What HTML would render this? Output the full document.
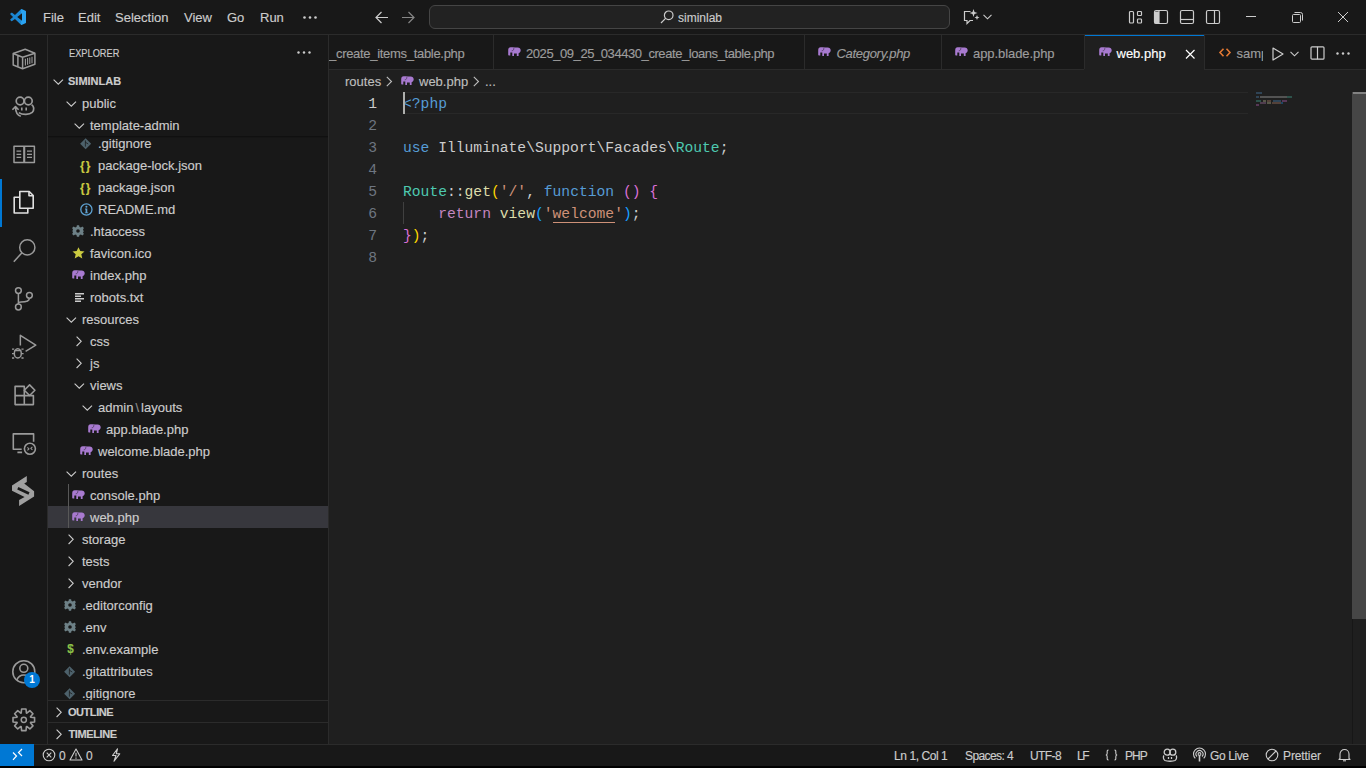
<!DOCTYPE html>
<html><head><meta charset="utf-8">
<style>
*{box-sizing:border-box;margin:0;padding:0}
html,body{width:1366px;height:768px;overflow:hidden;background:#181818;font-family:"Liberation Sans",sans-serif;color:#cccccc}
.t,.tabt,.st{-webkit-text-stroke:0.15px currentColor}
.a{position:absolute}
svg{position:absolute;overflow:visible}
.t{position:absolute;white-space:nowrap;font-size:13px;line-height:22px;padding-top:1px}
#title{left:0;top:0;width:1366px;height:35px;background:#181818;border-bottom:1px solid #2b2b2b}
#act{left:0;top:35px;width:48px;height:709px;background:#181818;border-right:1px solid #2b2b2b}
#side{left:48px;top:35px;width:281px;height:709px;background:#181818;border-right:1px solid #2b2b2b}
#tabs{left:329px;top:35px;width:1037px;height:35px;background:#181818;border-bottom:1px solid #2b2b2b}
#editor{left:329px;top:70px;width:1037px;height:674px;background:#1f1f1f}
#status{left:0;top:744px;width:1366px;height:22px;background:#181818;border-top:1px solid #2b2b2b}
#bottomband{left:0;top:766px;width:1366px;height:2px;background:#000000}
.menu{font-size:13px;line-height:35px;top:0;color:#cccccc;padding-top:0}
.code{position:absolute;font-family:"Liberation Mono",monospace;font-size:14.67px;line-height:22px;white-space:pre;color:#cccccc}
.ln{position:absolute;font-family:"Liberation Mono",monospace;font-size:14.67px;line-height:22px;color:#6e7681;text-align:right;width:40px;left:337px}
.tab{position:absolute;top:35px;height:35px;border-right:1px solid #2b2b2b;background:#181818}
.tabt{position:absolute;top:0;padding-top:1px;line-height:35px;font-size:13px;color:#9d9d9d;white-space:nowrap}
.st{position:absolute;top:744px;padding-top:1px;line-height:22px;font-size:12px;color:#cccccc;white-space:nowrap}
</style></head><body>

<div id="title" class="a"></div>
<div id="act" class="a"></div>
<div id="side" class="a"></div>
<div id="tabs" class="a"></div>
<div id="editor" class="a"></div>
<div id="status" class="a"></div>
<div id="bottomband" class="a"></div>

<!-- logo -->
<svg style="left:10px;top:9px" width="16" height="16" viewBox="0 0 100 100"><defs><linearGradient id="lg" x1="0" x2="1" y1="0" y2="0"><stop offset="0" stop-color="#1a84cf"/><stop offset="0.68" stop-color="#1c8ad6"/><stop offset="0.72" stop-color="#2aa3f2"/><stop offset="1" stop-color="#2aa3f2"/></linearGradient></defs><path fill="url(#lg)" d="M96.46 10.8L75.86.87a6.23 6.23 0 0 0-7.1 1.2L31 37 13.5 23.8a4.16 4.16 0 0 0-5.32.24L3 28.5a4.17 4.17 0 0 0 0 6.16L19 50 3 64.3a4.17 4.17 0 0 0 0 6.16l5.2 4.5a4.16 4.16 0 0 0 5.32.24L31 63l37.76 34.9a6.22 6.22 0 0 0 7.1 1.2l20.6-9.92A6.250 6.250 0 0 0 100 83.6V16.4a6.25 6.25 0 0 0-3.54-5.6zM75.02 72.7L45.11 50l29.91-22.7v45.4z"/></svg>
<div class="t menu" style="left:43px">File</div>
<div class="t menu" style="left:78px">Edit</div>
<div class="t menu" style="left:115px">Selection</div>
<div class="t menu" style="left:184px">View</div>
<div class="t menu" style="left:227px">Go</div>
<div class="t menu" style="left:260px">Run</div>
<svg style="left:303px;top:16px" width="14" height="3"><circle cx="1.5" cy="1.5" r="1.3" fill="#cccccc"/><circle cx="7" cy="1.5" r="1.3" fill="#cccccc"/><circle cx="12.5" cy="1.5" r="1.3" fill="#cccccc"/></svg>
<!-- nav arrows -->
<svg style="left:375px;top:11px" width="14" height="13" fill="none" stroke="#cccccc" stroke-width="1.2"><path d="M1 6.5H13M6.5 1L1 6.5L6.5 12"/></svg>
<svg style="left:401px;top:11px" width="14" height="13" fill="none" stroke="#868686" stroke-width="1.2"><path d="M1 6.5H13M7.5 1L13 6.5L7.5 12"/></svg>
<!-- command center -->
<div class="a" style="left:429px;top:5px;width:521px;height:24px;border:1px solid #454545;border-radius:6px;background:#222222"></div>
<svg style="left:660px;top:10px" width="14" height="14" fill="none" stroke="#cccccc" stroke-width="1.2"><circle cx="8.7" cy="5.3" r="4.3"/><path d="M5.6 8.4L1 13"/></svg>
<div class="t" style="left:678px;top:6px;font-size:12px;line-height:22px;color:#cccccc">siminlab</div>
<!-- copilot -->
<svg style="left:963px;top:8px" width="17" height="17" fill="none" stroke="#cccccc" stroke-width="1.2"><path d="M7.5 3.5H1.5V12.5H4V15.5L7 12.5H10"/><path fill="#cccccc" stroke="none" d="M10.5 1L11.5 4L14.5 5L11.5 6L10.5 9L9.5 6L6.5 5L9.5 4Z"/><path fill="#cccccc" stroke="none" d="M14 7L14.7 8.8L16.5 9.5L14.7 10.2L14 12L13.3 10.2L11.5 9.5L13.3 8.8Z"/></svg>
<svg style="left:983px;top:14px" width="9" height="6" fill="none" stroke="#cccccc" stroke-width="1.1"><path d="M0.5 0.8L4.5 4.8L8.5 0.8"/></svg>
<!-- layout icons -->
<svg style="left:1128px;top:10px" width="16" height="15" fill="none" stroke="#cccccc" stroke-width="1.2"><rect x="1.5" y="1.5" width="4" height="11.5" rx="1"/><rect x="9.5" y="1.5" width="4" height="4" rx="0.8"/><rect x="9.5" y="9" width="4" height="4" rx="0.8"/></svg>
<svg style="left:1153px;top:10px" width="16" height="15" fill="none" stroke="#cccccc" stroke-width="1.2"><rect x="1.5" y="0.5" width="13" height="13" rx="1.5"/><path d="M1.5 1.5H6V13.5H1.5Z" fill="#cccccc" stroke="none"/><path d="M6 0.5V13.5"/></svg>
<svg style="left:1179px;top:10px" width="16" height="15" fill="none" stroke="#cccccc" stroke-width="1.2"><rect x="1.5" y="0.5" width="13" height="13" rx="1.5"/><path d="M1.5 9.5H14.5"/></svg>
<svg style="left:1205px;top:10px" width="16" height="15" fill="none" stroke="#cccccc" stroke-width="1.2"><rect x="1.5" y="0.5" width="13" height="13" rx="1.5"/><path d="M9.5 0.5V13.5"/></svg>
<!-- window controls -->
<svg style="left:1245px;top:16px" width="12" height="2"><rect x="1" y="0" width="10" height="1" fill="#cccccc"/></svg>
<svg style="left:1291px;top:11px" width="13" height="13" fill="none" stroke="#cccccc" stroke-width="1"><rect x="1.5" y="3.5" width="8" height="8" rx="1"/><path d="M3.5 1.5H9.5A2 2 0 0 1 11.5 3.5V9.5"/></svg>
<svg style="left:1337px;top:11px" width="12" height="12" fill="none" stroke="#cccccc" stroke-width="1"><path d="M1 1L11 11M11 1L1 11"/></svg>



<!-- ACT -->
<svg style="left:0;top:0" width="48" height="744" fill="none" stroke="#9a9a9a" stroke-width="1.5" stroke-linejoin="round">
 <path d="M13.2 53.5L25.2 49.2L34.9 53.3V64.2L22.6 68.7L13.2 65Z"/>
 <path d="M13.2 53.5L22.6 57.2L34.9 53.3M22.6 57.2V68.7M17.9 55.4V66.6"/>
 <path d="M25.4 58.8V65.6M27.6 58.1V64.8M29.8 57.4V64M32 56.7V63.2" stroke-width="1.1"/>
 <circle cx="20.1" cy="101" r="3.9" stroke-width="1.7"/><circle cx="28.3" cy="101" r="3.9" stroke-width="1.7"/>
 <path d="M31.6 104.6C34 106.2 34.6 110 32.2 112.4C29.6 114.8 22.5 115 18.8 112.6" stroke-width="1.7"/>
 <path d="M21.8 107.6V110.4M26.2 107.6V110.4" stroke-width="1.6"/>
 <path d="M20.8 116.2C17.2 115.4 15.6 112 15.5 106.8M12.4 109.8L15.5 106.6L18.6 109.8" stroke-width="1.6"/>
 <path d="M14 146.2H23.9V162.5H14ZM24.5 146.2H34.4V162.5H24.5Z"/>
 <path d="M16.5 151.2H21.2M16.5 154.3H21.2M16.5 157.3H21.2M27 151.2H32M27 154.3H32M27 157.3H32" stroke-width="1.3"/>
 <g stroke="#e0e0e0" stroke-width="1.6">
  <path d="M19.5 197.2H14.2V213H27.8V208.5"/>
  <path d="M19.8 191.5H29.2L33.2 195.5V208.3H19.8Z"/>
  <path d="M29 191.6V195.7H33"/>
 </g>
 <circle cx="27.3" cy="247.4" r="7.6"/><path d="M21.8 252.9L13.8 261.7"/>
 <circle cx="18.4" cy="290.6" r="2.9"/><circle cx="29.4" cy="295.3" r="2.9"/><circle cx="18.4" cy="307" r="2.9"/>
 <path d="M18.4 293.5V304.1M29.4 298.2C29.4 301 27 302 21 302C19.5 302 18.4 302.5 18.4 303"/>
 <path d="M20.35 345.5V335.3L35.8 345.1L25.6 351.3"/>
 <ellipse cx="17.8" cy="353.4" rx="3.5" ry="4.6"/>
 <path d="M14.3 350.6H21.3M12 349.2H14.2M21.4 349.2H23.6M12 353.6H14.2M21.4 353.6H23.6M12 358H14.2M21.4 358H23.6" stroke-width="1.3"/>
 <path d="M15.1 386.4H24.3V395.6H15.1ZM15.1 395.6H24.3V404.6H15.1ZM24.3 395.6H33.4V404.6H24.3Z" stroke-width="1.6"/>
 <path d="M29.6 384.9L34.9 390.2L29.6 395.5L24.3 390.2Z" stroke-width="1.6"/>
 <path d="M21.7 449.3H13.3V433.9H33.6V441.7M17.4 452.4H22.1" stroke-width="1.6"/>
 <circle cx="29.9" cy="448.7" r="5.5" stroke-width="1.6"/>
 <path d="M27.4 447.4L29 448.9L27.4 450.4M32.4 446.9L30.8 448.4L32.4 449.9" stroke-width="1.1"/>
 <path fill="#a0a0a0" stroke="none" d="M26.8 476L26.8 482L24.2 483.5L34.1 491.3L34.1 496.6L19.1 505.9L19.1 500.1L24.6 497L12 490.8L12 485.5Z"/>
 <path d="M17.8 488.2L29 493.5" stroke="#181818" stroke-width="2.6"/>
 <circle cx="23.8" cy="671.7" r="11" stroke-width="1.6"/>
 <circle cx="23.8" cy="668.3" r="4" stroke-width="1.6"/>
 <path d="M16.8 680C18.3 676.5 20.5 675 23.8 675C27 675 29.3 676.5 30.8 680" stroke-width="1.6"/>
 <path d="M21.20 712.98L21.60 709.02L26.00 709.02L26.40 712.98L26.78 713.14L29.87 710.62L32.98 713.73L30.46 716.82L30.62 717.20L34.58 717.60L34.58 722.00L30.62 722.40L30.46 722.78L32.98 725.87L29.87 728.98L26.78 726.46L26.40 726.62L26.00 730.58L21.60 730.58L21.20 726.62L20.82 726.46L17.73 728.98L14.62 725.87L17.14 722.78L16.98 722.40L13.02 722.00L13.02 717.60L16.98 717.20L17.14 716.82L14.62 713.73L17.73 710.62L20.82 713.14Z" stroke-width="1.6"/>
 <circle cx="23.8" cy="719.8" r="2.6" stroke-width="1.5"/>
</svg>
<div class="a" style="left:0;top:179px;width:2px;height:48px;background:#0078d4"></div>
<div class="a" style="left:24px;top:672px;width:16px;height:16px;border-radius:8px;background:#0078d4;color:#fff;font-size:10px;font-weight:bold;line-height:16px;text-align:center">1</div>
<!-- /ACT -->
<!-- SIDEBAR -->
<div class="t" style="left:68.5px;top:35px;line-height:35px;font-size:11px;transform:scaleX(0.84);transform-origin:0 0;color:#cccccc">EXPLORER</div>
<svg style="left:297px;top:51px" width="14" height="3"><circle cx="1.5" cy="1.5" r="1.2" fill="#cccccc"/><circle cx="7" cy="1.5" r="1.2" fill="#cccccc"/><circle cx="12.5" cy="1.5" r="1.2" fill="#cccccc"/></svg>
<svg style="left:53px;top:78.5px" width="11" height="6" fill="none" stroke="#cccccc" stroke-width="1.1"><path d="M0.6 0.6L5.3 5.2L10 0.6"/></svg>
<div class="t" style="left:68px;top:69px;font-size:11px;font-weight:bold;color:#cccccc">SIMINLAB</div>
<div class="a" style="left:48px;top:92px;width:280px;height:608px;overflow:hidden">
<div class="a" style="left:-48px;top:-92px;width:330px;height:800px">
<div class="a" style="left:48px;top:506px;width:280px;height:22px;background:#37373d"></div>
<div class="a" style="left:68px;top:484px;width:1px;height:44px;background:#585858"></div>
<svg style="left:80px;top:137.5px" width="12" height="12" viewBox="0 0 12 12"><path fill="#4d616b" d="M5.6 0.2L11.1 5.7L5.6 11.2L0.1 5.7Z"/><path fill="none" stroke="#181818" stroke-opacity="0.75" stroke-width="1" d="M5.4 2.4V8.6M5.4 4.2L8.2 6"/></svg>
<div class="t" style="left:98px;top:132px">.gitignore</div>
<div class="t" style="left:80px;top:154px;color:#cbcb41;font-size:12px;font-weight:bold;letter-spacing:1px">{}</div>
<div class="t" style="left:98px;top:154px">package-lock.json</div>
<div class="t" style="left:80px;top:176px;color:#cbcb41;font-size:12px;font-weight:bold;letter-spacing:1px">{}</div>
<div class="t" style="left:98px;top:176px">package.json</div>
<svg style="left:80px;top:202.5px" width="14" height="14"><circle cx="6.4" cy="6.5" r="5.6" fill="none" stroke="#5ea2d2" stroke-width="1.3"/><circle cx="6.4" cy="3.8" r="1.05" fill="#5ea2d2"/><path d="M5 5.6H7.3V9.4H8.2V10.3H4.8V9.4H5.6V6.5H5Z" fill="#5ea2d2"/></svg>
<div class="t" style="left:98px;top:198px">README.md</div>
<svg style="left:72px;top:225px" width="12" height="12" viewBox="-6 -6 12 12"><path fill="#6d8086" fill-rule="evenodd" d="M-1.1 -5.8H1.1L1.5 -4.1L2.9 -3.5L4.4 -4.4L5.9 -2.9L5 -1.4L5.6 0L5.9 0V0L5 1.4L5.9 2.9L4.4 4.4L2.9 3.5L1.5 4.1L1.1 5.8H-1.1L-1.5 4.1L-2.9 3.5L-4.4 4.4L-5.9 2.9L-5 1.4L-5.6 0L-5 -1.4L-5.9 -2.9L-4.4 -4.4L-2.9 -3.5L-1.5 -4.1ZM0 -1.8A1.8 1.8 0 1 0 0 1.8A1.8 1.8 0 1 0 0 -1.8Z"/></svg>
<div class="t" style="left:90px;top:220px">.htaccess</div>
<svg style="left:72px;top:247px" width="13" height="12" viewBox="0 0 13 12"><path fill="#cbcb41" d="M6.5 0.3L8.3 4.1L12.5 4.5L9.3 7.3L10.3 11.5L6.5 9.3L2.7 11.5L3.7 7.3L0.5 4.5L4.7 4.1Z"/></svg>
<div class="t" style="left:90px;top:242px">favicon.ico</div>
<svg style="left:72px;top:270px" width="13" height="9" viewBox="0 0 13 9"><path fill="#a87ad0" d="M2.6 0.2C1 0.2 0.2 1.5 0.2 3.2V7.6C0.2 8.2 0.6 8.6 1.2 8.6H2.3V5.6H4.3V9H6V6.4H8.8V9H10.6V6.2C12 5.8 12.7 4.8 12.7 3.3C12.7 1.5 11.5 0.4 9.6 0.4H6.8C6.2 0.4 5.8 0.2 5.2 0.2Z"/><path fill="none" stroke="#181818" stroke-opacity="0.6" stroke-width="0.8" d="M5.8 0.6C6 2.4 5.4 3.9 3.7 3.9"/></svg>
<div class="t" style="left:90px;top:264px">index.php</div>
<svg style="left:75px;top:292.5px" width="10" height="9"><path fill="#cccccc" d="M0 0H9V1.4H0ZM0 2.5H6V3.9H0ZM0 5H9V6.4H0ZM0 7.5H6V8.9H0Z"/></svg>
<div class="t" style="left:90px;top:286px">robots.txt</div>
<svg style="left:66px;top:317px" width="11" height="6" fill="none" stroke="#cccccc" stroke-width="1.1"><path d="M0.6 0.6L5.3 5.2L10 0.6"/></svg>
<div class="t" style="left:82px;top:308px">resources</div>
<svg style="left:76.3px;top:335.5px" width="6" height="11" fill="none" stroke="#cccccc" stroke-width="1.1"><path d="M0.6 0.6L5.2 5.3L0.6 10"/></svg>
<div class="t" style="left:90px;top:330px">css</div>
<svg style="left:76.3px;top:357.5px" width="6" height="11" fill="none" stroke="#cccccc" stroke-width="1.1"><path d="M0.6 0.6L5.2 5.3L0.6 10"/></svg>
<div class="t" style="left:90px;top:352px">js</div>
<svg style="left:74px;top:383px" width="11" height="6" fill="none" stroke="#cccccc" stroke-width="1.1"><path d="M0.6 0.6L5.3 5.2L10 0.6"/></svg>
<div class="t" style="left:90px;top:374px">views</div>
<svg style="left:82px;top:405px" width="11" height="6" fill="none" stroke="#cccccc" stroke-width="1.1"><path d="M0.6 0.6L5.3 5.2L10 0.6"/></svg>
<div class="t" style="left:98px;top:396px">admin<span style="color:#8b8b8b;padding:0 2px">\</span>layouts</div>
<svg style="left:88px;top:424px" width="13" height="9" viewBox="0 0 13 9"><path fill="#a87ad0" d="M2.6 0.2C1 0.2 0.2 1.5 0.2 3.2V7.6C0.2 8.2 0.6 8.6 1.2 8.6H2.3V5.6H4.3V9H6V6.4H8.8V9H10.6V6.2C12 5.8 12.7 4.8 12.7 3.3C12.7 1.5 11.5 0.4 9.6 0.4H6.8C6.2 0.4 5.8 0.2 5.2 0.2Z"/><path fill="none" stroke="#181818" stroke-opacity="0.6" stroke-width="0.8" d="M5.8 0.6C6 2.4 5.4 3.9 3.7 3.9"/></svg>
<div class="t" style="left:106px;top:418px">app.blade.php</div>
<svg style="left:80px;top:446px" width="13" height="9" viewBox="0 0 13 9"><path fill="#a87ad0" d="M2.6 0.2C1 0.2 0.2 1.5 0.2 3.2V7.6C0.2 8.2 0.6 8.6 1.2 8.6H2.3V5.6H4.3V9H6V6.4H8.8V9H10.6V6.2C12 5.8 12.7 4.8 12.7 3.3C12.7 1.5 11.5 0.4 9.6 0.4H6.8C6.2 0.4 5.8 0.2 5.2 0.2Z"/><path fill="none" stroke="#181818" stroke-opacity="0.6" stroke-width="0.8" d="M5.8 0.6C6 2.4 5.4 3.9 3.7 3.9"/></svg>
<div class="t" style="left:98px;top:440px">welcome.blade.php</div>
<svg style="left:66px;top:471px" width="11" height="6" fill="none" stroke="#cccccc" stroke-width="1.1"><path d="M0.6 0.6L5.3 5.2L10 0.6"/></svg>
<div class="t" style="left:82px;top:462px">routes</div>
<svg style="left:72px;top:490px" width="13" height="9" viewBox="0 0 13 9"><path fill="#a87ad0" d="M2.6 0.2C1 0.2 0.2 1.5 0.2 3.2V7.6C0.2 8.2 0.6 8.6 1.2 8.6H2.3V5.6H4.3V9H6V6.4H8.8V9H10.6V6.2C12 5.8 12.7 4.8 12.7 3.3C12.7 1.5 11.5 0.4 9.6 0.4H6.8C6.2 0.4 5.8 0.2 5.2 0.2Z"/><path fill="none" stroke="#181818" stroke-opacity="0.6" stroke-width="0.8" d="M5.8 0.6C6 2.4 5.4 3.9 3.7 3.9"/></svg>
<div class="t" style="left:90px;top:484px">console.php</div>
<svg style="left:72px;top:512px" width="13" height="9" viewBox="0 0 13 9"><path fill="#a87ad0" d="M2.6 0.2C1 0.2 0.2 1.5 0.2 3.2V7.6C0.2 8.2 0.6 8.6 1.2 8.6H2.3V5.6H4.3V9H6V6.4H8.8V9H10.6V6.2C12 5.8 12.7 4.8 12.7 3.3C12.7 1.5 11.5 0.4 9.6 0.4H6.8C6.2 0.4 5.8 0.2 5.2 0.2Z"/><path fill="none" stroke="#181818" stroke-opacity="0.6" stroke-width="0.8" d="M5.8 0.6C6 2.4 5.4 3.9 3.7 3.9"/></svg>
<div class="t" style="left:90px;top:506px">web.php</div>
<svg style="left:68.3px;top:533.5px" width="6" height="11" fill="none" stroke="#cccccc" stroke-width="1.1"><path d="M0.6 0.6L5.2 5.3L0.6 10"/></svg>
<div class="t" style="left:82px;top:528px">storage</div>
<svg style="left:68.3px;top:555.5px" width="6" height="11" fill="none" stroke="#cccccc" stroke-width="1.1"><path d="M0.6 0.6L5.2 5.3L0.6 10"/></svg>
<div class="t" style="left:82px;top:550px">tests</div>
<svg style="left:68.3px;top:577.5px" width="6" height="11" fill="none" stroke="#cccccc" stroke-width="1.1"><path d="M0.6 0.6L5.2 5.3L0.6 10"/></svg>
<div class="t" style="left:82px;top:572px">vendor</div>
<svg style="left:64px;top:599px" width="12" height="12" viewBox="-6 -6 12 12"><path fill="#6d8086" fill-rule="evenodd" d="M-1.1 -5.8H1.1L1.5 -4.1L2.9 -3.5L4.4 -4.4L5.9 -2.9L5 -1.4L5.6 0L5.9 0V0L5 1.4L5.9 2.9L4.4 4.4L2.9 3.5L1.5 4.1L1.1 5.8H-1.1L-1.5 4.1L-2.9 3.5L-4.4 4.4L-5.9 2.9L-5 1.4L-5.6 0L-5 -1.4L-5.9 -2.9L-4.4 -4.4L-2.9 -3.5L-1.5 -4.1ZM0 -1.8A1.8 1.8 0 1 0 0 1.8A1.8 1.8 0 1 0 0 -1.8Z"/></svg>
<div class="t" style="left:82px;top:594px">.editorconfig</div>
<svg style="left:64px;top:621px" width="12" height="12" viewBox="-6 -6 12 12"><path fill="#6d8086" fill-rule="evenodd" d="M-1.1 -5.8H1.1L1.5 -4.1L2.9 -3.5L4.4 -4.4L5.9 -2.9L5 -1.4L5.6 0L5.9 0V0L5 1.4L5.9 2.9L4.4 4.4L2.9 3.5L1.5 4.1L1.1 5.8H-1.1L-1.5 4.1L-2.9 3.5L-4.4 4.4L-5.9 2.9L-5 1.4L-5.6 0L-5 -1.4L-5.9 -2.9L-4.4 -4.4L-2.9 -3.5L-1.5 -4.1ZM0 -1.8A1.8 1.8 0 1 0 0 1.8A1.8 1.8 0 1 0 0 -1.8Z"/></svg>
<div class="t" style="left:82px;top:616px">.env</div>
<div class="t" style="left:66.5px;top:637px;color:#8dc149;font-size:13px;font-weight:bold;transform:scaleX(0.9)">$</div>
<div class="t" style="left:82px;top:638px">.env.example</div>
<svg style="left:64px;top:665.5px" width="12" height="12" viewBox="0 0 12 12"><path fill="#4d616b" d="M5.6 0.2L11.1 5.7L5.6 11.2L0.1 5.7Z"/><path fill="none" stroke="#181818" stroke-opacity="0.75" stroke-width="1" d="M5.4 2.4V8.6M5.4 4.2L8.2 6"/></svg>
<div class="t" style="left:82px;top:660px">.gitattributes</div>
<svg style="left:64px;top:687.5px" width="12" height="12" viewBox="0 0 12 12"><path fill="#4d616b" d="M5.6 0.2L11.1 5.7L5.6 11.2L0.1 5.7Z"/><path fill="none" stroke="#181818" stroke-opacity="0.75" stroke-width="1" d="M5.4 2.4V8.6M5.4 4.2L8.2 6"/></svg>
<div class="t" style="left:82px;top:682px">.gitignore</div>
<div class="a" style="left:48px;top:92px;width:280px;height:44px;background:#181818"></div>
<div class="a" style="left:48px;top:136px;width:280px;height:1px;background:#101010"></div>
<div class="a" style="left:48px;top:137px;width:280px;height:1px;background:#151515"></div>
<svg style="left:66px;top:101px" width="11" height="6" fill="none" stroke="#cccccc" stroke-width="1.1"><path d="M0.6 0.6L5.3 5.2L10 0.6"/></svg>
<div class="t" style="left:82px;top:92px">public</div>
<svg style="left:74px;top:123px" width="11" height="6" fill="none" stroke="#cccccc" stroke-width="1.1"><path d="M0.6 0.6L5.3 5.2L10 0.6"/></svg>
<div class="t" style="left:90px;top:114px">template-admin</div>
</div></div>
<div class="a" style="left:48px;top:700px;width:280px;height:1px;background:#2b2b2b"></div>
<svg style="left:56px;top:706.5px" width="6" height="11" fill="none" stroke="#cccccc" stroke-width="1.1"><path d="M0.6 0.6L5.2 5.3L0.6 10"/></svg>
<div class="t" style="left:68px;top:700px;font-size:11px;font-weight:bold;letter-spacing:-0.45px">OUTLINE</div>
<div class="a" style="left:48px;top:722px;width:280px;height:1px;background:#2b2b2b"></div>
<svg style="left:56px;top:728.5px" width="6" height="11" fill="none" stroke="#cccccc" stroke-width="1.1"><path d="M0.6 0.6L5.2 5.3L0.6 10"/></svg>
<div class="t" style="left:68.5px;top:722px;font-size:11px;font-weight:bold;letter-spacing:-0.4px">TIMELINE</div>
<!-- /SIDEBAR -->
<!-- EDITOR -->
<div class="a" style="left:329px;top:35px;width:934px;height:35px;overflow:hidden">
<div class="a" style="left:-129px;top:0;width:293px;height:34px;background:#181818"></div>
<svg style="left:-429px;top:12px" width="13" height="9" viewBox="0 0 13 9"><path fill="#a87ad0" d="M2.6 0.2C1 0.2 0.2 1.5 0.2 3.2V7.6C0.2 8.2 0.6 8.6 1.2 8.6H2.3V5.6H4.3V9H6V6.4H8.8V9H10.6V6.2C12 5.8 12.7 4.8 12.7 3.3C12.7 1.5 11.5 0.4 9.6 0.4H6.8C6.2 0.4 5.8 0.2 5.2 0.2Z"/><path fill="none" stroke="#181818" stroke-opacity="0.6" stroke-width="0.8" d="M5.8 0.6C6 2.4 5.4 3.9 3.7 3.9"/></svg>
<div class="tabt" style="left:0px;top:0;color:#9d9d9d;letter-spacing:-0.3px;">_create_items_table.php</div>
<div class="a" style="left:164px;top:0;width:312px;height:34px;background:#181818"></div>
<svg style="left:178.5px;top:12px" width="13" height="9" viewBox="0 0 13 9"><path fill="#a87ad0" d="M2.6 0.2C1 0.2 0.2 1.5 0.2 3.2V7.6C0.2 8.2 0.6 8.6 1.2 8.6H2.3V5.6H4.3V9H6V6.4H8.8V9H10.6V6.2C12 5.8 12.7 4.8 12.7 3.3C12.7 1.5 11.5 0.4 9.6 0.4H6.8C6.2 0.4 5.8 0.2 5.2 0.2Z"/><path fill="none" stroke="#181818" stroke-opacity="0.6" stroke-width="0.8" d="M5.8 0.6C6 2.4 5.4 3.9 3.7 3.9"/></svg>
<div class="tabt" style="left:197px;top:0;color:#9d9d9d;letter-spacing:-0.43px;">2025_09_25_034430_create_loans_table.php</div>
<div class="a" style="left:476px;top:0;width:136px;height:34px;background:#181818"></div>
<svg style="left:489px;top:12px" width="13" height="9" viewBox="0 0 13 9"><path fill="#a87ad0" d="M2.6 0.2C1 0.2 0.2 1.5 0.2 3.2V7.6C0.2 8.2 0.6 8.6 1.2 8.6H2.3V5.6H4.3V9H6V6.4H8.8V9H10.6V6.2C12 5.8 12.7 4.8 12.7 3.3C12.7 1.5 11.5 0.4 9.6 0.4H6.8C6.2 0.4 5.8 0.2 5.2 0.2Z"/><path fill="none" stroke="#181818" stroke-opacity="0.6" stroke-width="0.8" d="M5.8 0.6C6 2.4 5.4 3.9 3.7 3.9"/></svg>
<div class="tabt" style="left:507.5px;top:0;color:#9d9d9d;letter-spacing:-0.3px;font-style:italic;">Category.php</div>
<div class="a" style="left:612px;top:0;width:143px;height:34px;background:#181818"></div>
<svg style="left:626px;top:12px" width="13" height="9" viewBox="0 0 13 9"><path fill="#a87ad0" d="M2.6 0.2C1 0.2 0.2 1.5 0.2 3.2V7.6C0.2 8.2 0.6 8.6 1.2 8.6H2.3V5.6H4.3V9H6V6.4H8.8V9H10.6V6.2C12 5.8 12.7 4.8 12.7 3.3C12.7 1.5 11.5 0.4 9.6 0.4H6.8C6.2 0.4 5.8 0.2 5.2 0.2Z"/><path fill="none" stroke="#181818" stroke-opacity="0.6" stroke-width="0.8" d="M5.8 0.6C6 2.4 5.4 3.9 3.7 3.9"/></svg>
<div class="tabt" style="left:644px;top:0;color:#9d9d9d;letter-spacing:-0.07px;">app.blade.php</div>
<div class="a" style="left:755px;top:0;width:120px;height:35px;background:#1f1f1f"></div>
<div class="a" style="left:756px;top:0;width:119px;height:1px;background:#0078d4"></div>
<svg style="left:769.5px;top:12px" width="13" height="9" viewBox="0 0 13 9"><path fill="#a87ad0" d="M2.6 0.2C1 0.2 0.2 1.5 0.2 3.2V7.6C0.2 8.2 0.6 8.6 1.2 8.6H2.3V5.6H4.3V9H6V6.4H8.8V9H10.6V6.2C12 5.8 12.7 4.8 12.7 3.3C12.7 1.5 11.5 0.4 9.6 0.4H6.8C6.2 0.4 5.8 0.2 5.2 0.2Z"/><path fill="none" stroke="#1f1f1f" stroke-opacity="0.6" stroke-width="0.8" d="M5.8 0.6C6 2.4 5.4 3.9 3.7 3.9"/></svg>
<div class="tabt" style="left:787.5px;top:0;color:#ffffff;letter-spacing:0px;">web.php</div>
<svg style="left:855.5px;top:13.5px" width="11" height="11" fill="none" stroke="#ffffff" stroke-width="1.2"><path d="M1 1L9.5 9.5M9.5 1L1 9.5"/></svg>
<div class="a" style="left:875px;top:0;width:196px;height:34px;background:#181818"></div>
<svg style="left:890px;top:13px" width="12" height="9" fill="none" stroke="#e37933" stroke-width="1.6"><path d="M4.5 0.8L1 4.5L4.5 8.2M7.5 0.8L11 4.5L7.5 8.2"/></svg>
<div class="tabt" style="left:907.5px;top:0;color:#9d9d9d;letter-spacing:0px;">sample.html</div>
<div class="a" style="left:164px;top:0;width:1px;height:34px;background:#2b2b2b"></div>
<div class="a" style="left:475px;top:0;width:1px;height:34px;background:#2b2b2b"></div>
<div class="a" style="left:612px;top:0;width:1px;height:34px;background:#2b2b2b"></div>
<div class="a" style="left:755px;top:0;width:1px;height:34px;background:#2b2b2b"></div>
<div class="a" style="left:875px;top:0;width:1px;height:34px;background:#2b2b2b"></div>
</div>
<div class="a" style="left:1263px;top:35px;width:103px;height:34px;background:#181818"></div>
<svg style="left:1272px;top:47px" width="12" height="14" fill="none" stroke="#cccccc" stroke-width="1.2" stroke-linejoin="round"><path d="M1 1L11 7L1 13Z"/></svg>
<svg style="left:1290px;top:51px" width="9" height="6" fill="none" stroke="#cccccc" stroke-width="1.1"><path d="M0.5 0.8L4.5 4.8L8.5 0.8"/></svg>
<svg style="left:1310px;top:46px" width="15" height="14" fill="none" stroke="#cccccc" stroke-width="1.2"><rect x="1" y="0.8" width="13" height="12.4" rx="1"/><path d="M7.5 0.8V13.2"/></svg>
<svg style="left:1336px;top:52px" width="14" height="3"><circle cx="1.5" cy="1.5" r="1.2" fill="#cccccc"/><circle cx="7" cy="1.5" r="1.2" fill="#cccccc"/><circle cx="12.5" cy="1.5" r="1.2" fill="#cccccc"/></svg>
<div class="t" style="left:345px;top:70px;color:#bdbdbd">routes</div>
<svg style="left:386px;top:76px" width="7" height="11" fill="none" stroke="#bdbdbd" stroke-width="1.1"><path d="M0.8 0.8L5.5 5.5L0.8 10.2"/></svg>
<svg style="left:401px;top:76px" width="13" height="9" viewBox="0 0 13 9"><path fill="#a87ad0" d="M2.6 0.2C1 0.2 0.2 1.5 0.2 3.2V7.6C0.2 8.2 0.6 8.6 1.2 8.6H2.3V5.6H4.3V9H6V6.4H8.8V9H10.6V6.2C12 5.8 12.7 4.8 12.7 3.3C12.7 1.5 11.5 0.4 9.6 0.4H6.8C6.2 0.4 5.8 0.2 5.2 0.2Z"/><path fill="none" stroke="#1f1f1f" stroke-opacity="0.6" stroke-width="0.8" d="M5.8 0.6C6 2.4 5.4 3.9 3.7 3.9"/></svg>
<div class="t" style="left:419px;top:70px;color:#bdbdbd">web.php</div>
<svg style="left:473px;top:76px" width="7" height="11" fill="none" stroke="#bdbdbd" stroke-width="1.1"><path d="M0.8 0.8L5.5 5.5L0.8 10.2"/></svg>
<div class="t" style="left:485px;top:70px;color:#bdbdbd">...</div>
<div class="a" style="left:403px;top:92px;width:845px;height:22px;border-top:1px solid #282828;border-bottom:1px solid #282828"></div>
<div class="ln" style="top:93px;color:#cccccc">1</div>
<div class="ln" style="top:115px;color:#6e7681">2</div>
<div class="ln" style="top:137px;color:#6e7681">3</div>
<div class="ln" style="top:159px;color:#6e7681">4</div>
<div class="ln" style="top:181px;color:#6e7681">5</div>
<div class="ln" style="top:203px;color:#6e7681">6</div>
<div class="ln" style="top:225px;color:#6e7681">7</div>
<div class="ln" style="top:247px;color:#6e7681">8</div>
<div class="code" style="left:403px;top:93px"><span style="color:#569cd6">&lt;?php</span></div>
<div class="code" style="left:403px;top:137px"><span style="color:#569cd6">use</span> <span style="color:#cccccc">Illuminate\Support\Facades\</span><span style="color:#4ec9b0">Route</span><span style="color:#cccccc">;</span></div>
<div class="code" style="left:403px;top:181px"><span style="color:#4ec9b0">Route</span><span style="color:#cccccc">::</span><span style="color:#dcdcaa">get</span><span style="color:#ffd700">(</span><span style="color:#ce9178">'/'</span><span style="color:#cccccc">, </span><span style="color:#569cd6">function</span> <span style="color:#da70d6">()</span> <span style="color:#da70d6">{</span></div>
<div class="code" style="left:403px;top:203px">    <span style="color:#c586c0">return</span> <span style="color:#dcdcaa">view</span><span style="color:#179fff">(</span><span style="color:#ce9178">'</span><span style="color:#ce9178">welcome</span><span style="color:#ce9178">'</span><span style="color:#179fff">)</span><span style="color:#cccccc">;</span></div>
<div class="code" style="left:403px;top:225px"><span style="color:#da70d6">}</span><span style="color:#ffd700">)</span><span style="color:#cccccc">;</span></div>
<div class="a" style="left:403px;top:202px;width:1px;height:22px;background:#404040"></div>
<div class="a" style="left:553px;top:222px;width:62px;height:1px;background:#ce9178"></div>
<div class="a" style="left:403px;top:92px;width:2px;height:22px;background:#aeafad"></div>
<div class="a" style="left:1256px;top:92px;width:6px;height:2px;background:#569cd6;opacity:0.3"></div>
<div class="a" style="left:1256px;top:96px;width:3px;height:2px;background:#569cd6;opacity:0.3"></div>
<div class="a" style="left:1260px;top:96px;width:27px;height:2px;background:#cccccc;opacity:0.3"></div>
<div class="a" style="left:1287px;top:96px;width:5px;height:2px;background:#4ec9b0;opacity:0.3"></div>
<div class="a" style="left:1256px;top:100px;width:5px;height:2px;background:#4ec9b0;opacity:0.3"></div>
<div class="a" style="left:1263px;top:100px;width:3px;height:2px;background:#dcdcaa;opacity:0.3"></div>
<div class="a" style="left:1267px;top:100px;width:4px;height:2px;background:#ce9178;opacity:0.3"></div>
<div class="a" style="left:1273px;top:100px;width:8px;height:2px;background:#569cd6;opacity:0.3"></div>
<div class="a" style="left:1282px;top:100px;width:5px;height:2px;background:#da70d6;opacity:0.3"></div>
<div class="a" style="left:1260px;top:102px;width:6px;height:2px;background:#c586c0;opacity:0.3"></div>
<div class="a" style="left:1267px;top:102px;width:4px;height:2px;background:#dcdcaa;opacity:0.3"></div>
<div class="a" style="left:1272px;top:102px;width:9px;height:2px;background:#ce9178;opacity:0.3"></div>
<div class="a" style="left:1281px;top:102px;width:2px;height:2px;background:#179fff;opacity:0.3"></div>
<div class="a" style="left:1256px;top:104px;width:3px;height:2px;background:#da70d6;opacity:0.3"></div>
<div class="a" style="left:1352px;top:92px;width:1px;height:652px;background:#171717"></div>
<div class="a" style="left:1352px;top:92px;width:14px;height:527px;background:#464646"></div>
<div class="a" style="left:1353px;top:92px;width:13px;height:2px;background:#828282"></div>
<!-- /EDITOR -->
<!-- STATUS -->
<div class="a" style="left:0;top:744px;width:34px;height:22px;background:#0078d4"></div>
<svg style="left:12px;top:748px" width="11" height="13" fill="none" stroke="#ffffff" stroke-width="1.2"><path d="M1 4.5L4.5 8L1 11.8M10 1L6.5 4.5L10 8"/></svg>
<svg style="left:42px;top:748px" width="14" height="14" fill="none" stroke="#cccccc" stroke-width="1.1"><circle cx="7" cy="7" r="5.8"/><path d="M4.7 4.7L9.3 9.3M9.3 4.7L4.7 9.3"/></svg>
<div class="st" style="left:59px">0</div>
<svg style="left:69px;top:748px" width="14" height="13" fill="none" stroke="#cccccc" stroke-width="1.1" stroke-linejoin="round"><path d="M7 1L13 12H1Z"/><path d="M7 4.8V8.5M7 9.6V10.8"/></svg>
<div class="st" style="left:86px">0</div>
<svg style="left:111px;top:748px" width="10" height="14" fill="none" stroke="#cccccc" stroke-width="1.1" stroke-linejoin="round"><path d="M6.5 0.8L1.5 7.5H5L3 13.2L8.7 5.8H5.3Z"/></svg>
<div class="st" style="left:894px;letter-spacing:-0.43px">Ln 1, Col 1</div>
<div class="st" style="left:965px;letter-spacing:-0.6px">Spaces: 4</div>
<div class="st" style="left:1030px;letter-spacing:-0.6px">UTF-8</div>
<div class="st" style="left:1077px;letter-spacing:-1.5px">LF</div>
<svg style="left:1105px;top:749px" width="13" height="12" fill="none" stroke="#cccccc" stroke-width="1.1"><path d="M3.5 1C1.8 1 2.2 2.5 2.2 4.2C2.2 5.5 1.5 6 0.8 6C1.5 6 2.2 6.5 2.2 7.8C2.2 9.5 1.8 11 3.5 11M9.5 1C11.2 1 10.8 2.5 10.8 4.2C10.8 5.5 11.5 6 12.2 6C11.5 6 10.8 6.5 10.8 7.8C10.8 9.5 11.2 11 9.5 11"/></svg>
<div class="st" style="left:1125px;letter-spacing:-1.0px">PHP</div>
<svg style="left:1162px;top:748px" width="16" height="14" fill="none" stroke="#cccccc" stroke-width="1.3"><circle cx="5.2" cy="4.2" r="3"/><circle cx="10.8" cy="4.2" r="3"/><path d="M2 7.5C1 8.5 1.2 11.5 3 12.5C5 13.5 11 13.5 13 12.5C14.8 11.5 15 8.5 14 7.5"/><path d="M6.5 9V11M9.5 9V11"/></svg>
<svg style="left:1193px;top:748px" width="13" height="14" fill="none" stroke="#cccccc" stroke-width="1.1"><circle cx="6.5" cy="6" r="1.4"/><path d="M4 8.5A3.5 3.5 0 1 1 9 8.5M2.3 10.3A6 6 0 1 1 10.7 10.3"/><path d="M6.5 7.5V13.5" stroke-width="1.6"/></svg>
<div class="st" style="left:1210px;letter-spacing:-0.4px">Go Live</div>
<svg style="left:1265px;top:748px" width="14" height="14" fill="none" stroke="#cccccc" stroke-width="1.1"><circle cx="7" cy="7" r="5.8"/><path d="M3 11L11 3"/></svg>
<div class="st" style="left:1283px;letter-spacing:-0.1px">Prettier</div>
<svg style="left:1338px;top:748px" width="13" height="14" fill="none" stroke="#cccccc" stroke-width="1.1" stroke-linejoin="round"><path d="M2 10.5V6A4.5 4.5 0 0 1 11 6V10.5L12 11.5H1Z"/><path d="M5 12.8H8"/></svg>
<!-- /STATUS -->
</body></html>
